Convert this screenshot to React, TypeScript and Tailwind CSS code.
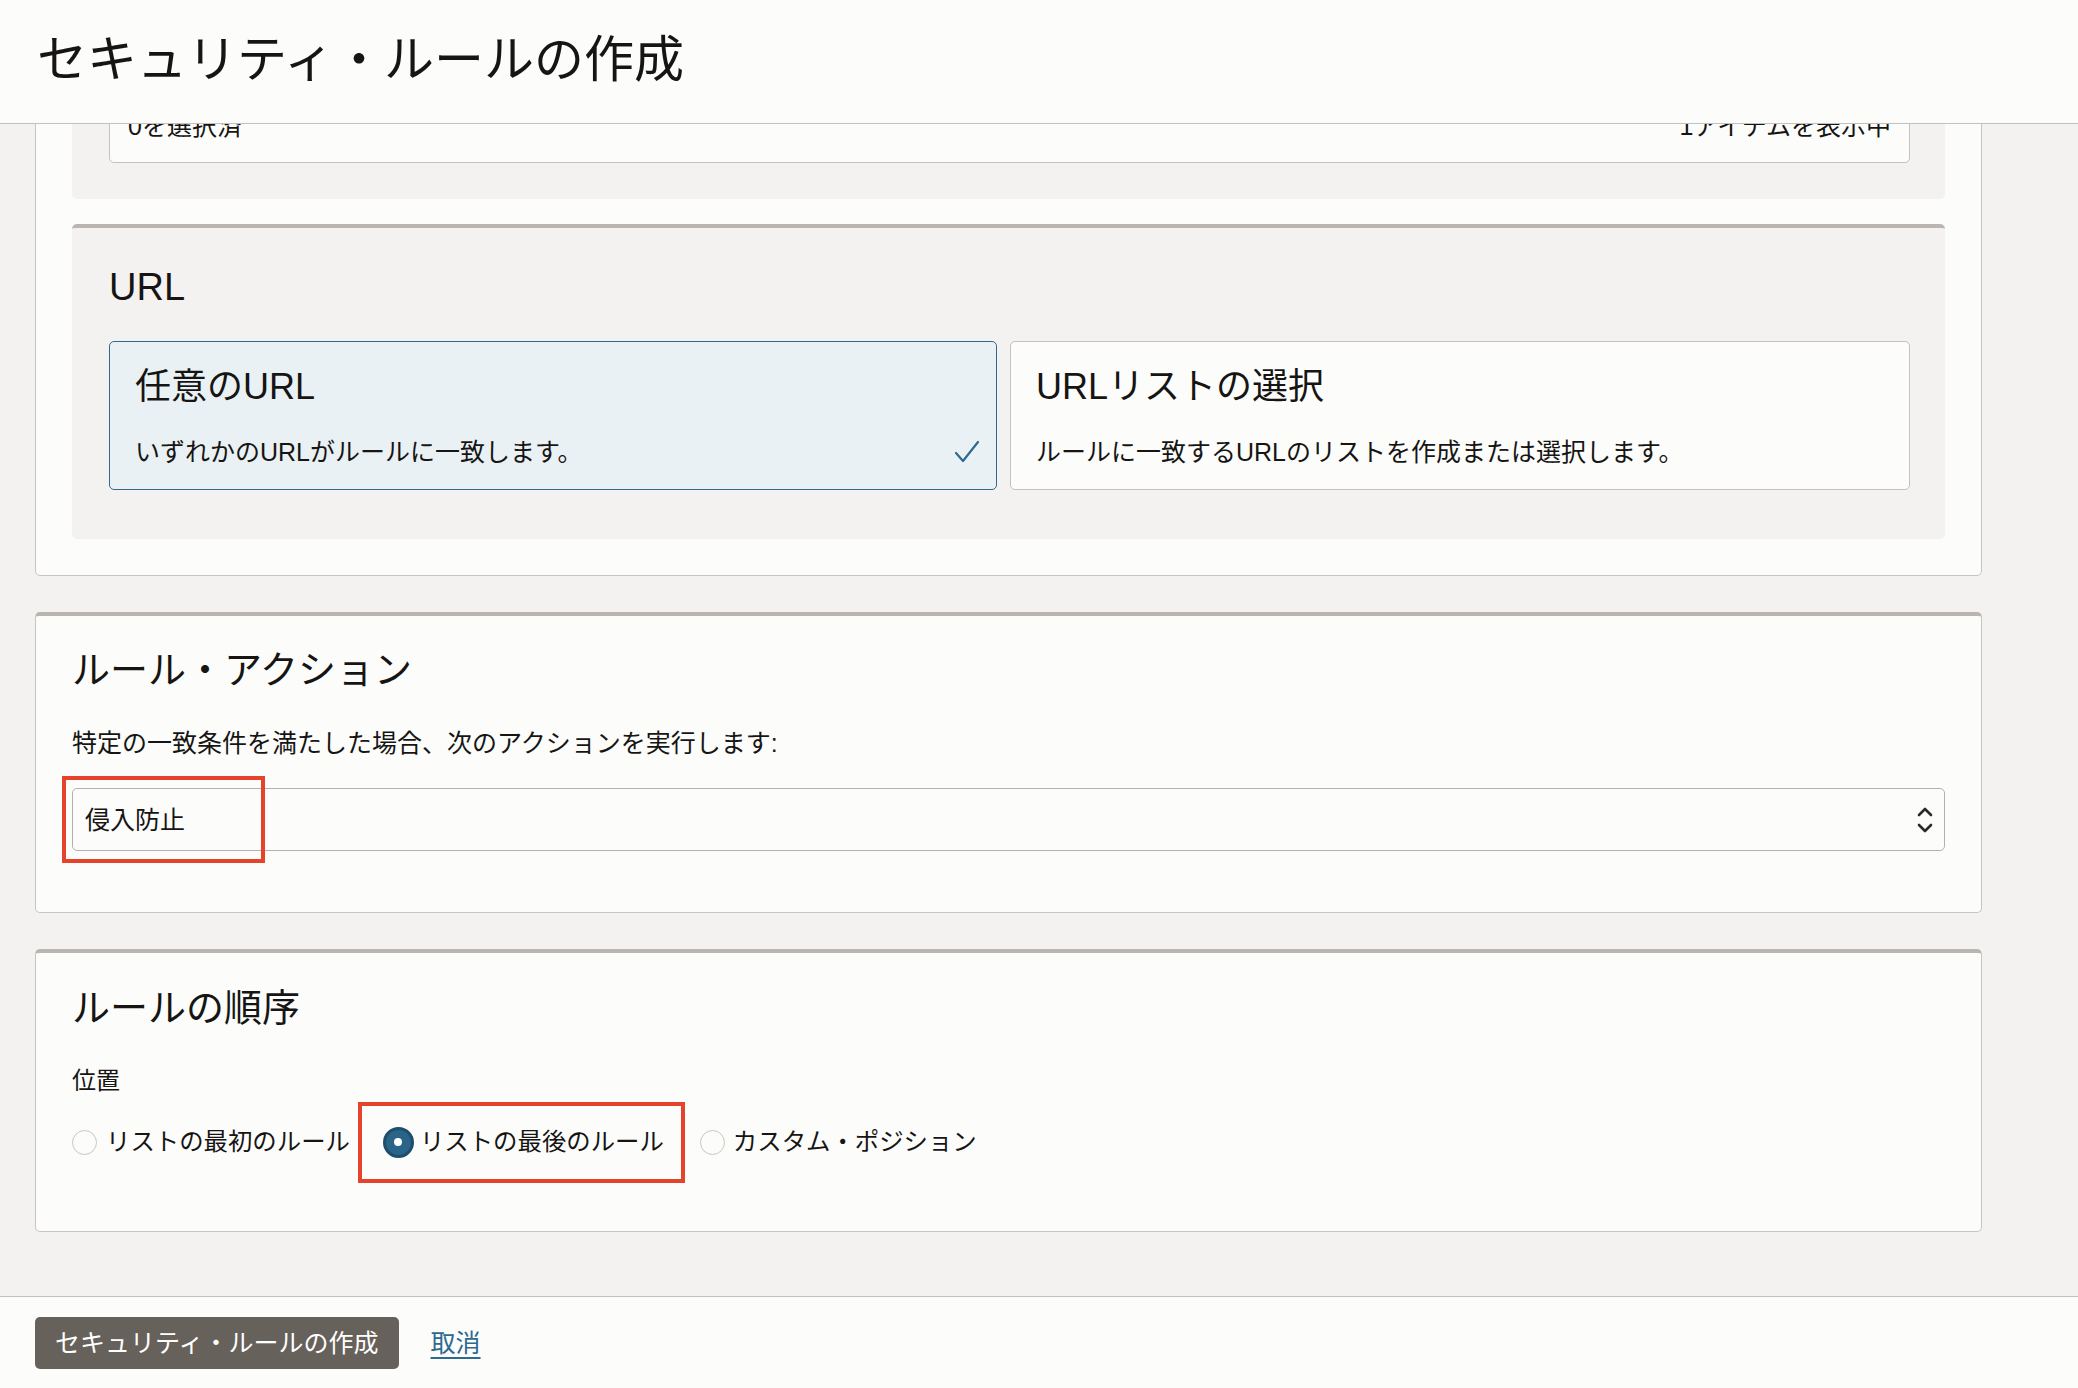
import React from "react";

const FONT = { fontFamily: '"Liberation Sans", "Noto Sans CJK JP", sans-serif' };

function ChoiceCard({ title, desc, selected, className }: { title: string; desc: string; selected?: boolean; className: string }) {
  return (
    <div
      className={`relative rounded-[5px] border pl-[25px] pr-[20px] pt-[23px] pb-[19px] ${className} ${
        selected ? "border-[#2e6b8f] bg-[#eaf1f5]" : "border-[#c5c1bd] bg-[#fcfcfb]"
      }`}
    >
      <div className="text-[36px] leading-[44px] text-[#161513]">{title}</div>
      <div className="mt-[25px] text-[25px] leading-[36px] text-[#161513]">{desc}</div>
      {selected && (
        <svg className="absolute right-[16px] bottom-[25px]" width="26" height="24" viewBox="0 0 26 24" fill="none">
          <path d="M2 13 L9 21 L24 2" stroke="#2e6b8f" strokeWidth="2.2" strokeLinecap="round" strokeLinejoin="round" />
        </svg>
      )}
    </div>
  );
}

function Radio({ checked }: { checked?: boolean }) {
  if (checked) {
    return (
      <span className="flex h-[31px] w-[31px] items-center justify-center rounded-full border-[3px] border-[#1f4e6c] bg-[#2b6489]">
        <span className="h-[8px] w-[8px] rounded-full bg-white" />
      </span>
    );
  }
  return <span className="h-[25px] w-[25px] rounded-full border-[1.5px] border-[#c9c7c5] bg-[#fcfcfb]" />;
}

export default function App() {
  return (
    <div className="flex h-[1388px] w-full flex-col overflow-hidden bg-[#f3f2f1] text-[#161513]" style={FONT}>
      {/* header */}
      <header className="flex h-[124px] shrink-0 items-center border-b border-[#c4c1bd] bg-[#fcfcfb] pl-[37px] pb-[4px]">
        <h1 className="text-[50px] leading-[60px] font-normal">セキュリティ・ルールの作成</h1>
      </header>

      {/* scrolled body */}
      <main className="flex-1 overflow-hidden pl-[35px] pr-[96px]">
        <div className="-mt-[192px] flex flex-col gap-[36px]">
          {/* card 1: source + URL */}
          <section className="rounded-[5px] border border-[#c8c4c0] bg-[#fcfcfb] px-[36px] pt-[37px] pb-[36px]">
            <div className="rounded-[5px] bg-[#f3f2f1] pl-[37px] pr-[35px] pt-[37px] pb-[36px]">
              <div className="rounded-[5px] border border-[#c5c1bd] bg-[#fcfcfb]">
                <div className="h-[100px]" />
                <div className="flex justify-between px-[18px] pb-[18px] text-[25px] leading-[36px]">
                  <span>0を選択済</span>
                  <span>1アイテムを表示中</span>
                </div>
              </div>
            </div>

            <div className="mt-[25px] rounded-[5px] border-t-[4px] border-[#bab5b0] bg-[#f3f2f1] pl-[37px] pr-[35px] pt-[36px] pb-[49px]">
              <h2 className="text-[38px] leading-[46px] font-normal">URL</h2>
              <div className="mt-[31px] flex gap-[13px]">
                <ChoiceCard className="w-[888px] shrink-0" title="任意のURL" desc="いずれかのURLがルールに一致します。" selected />
                <ChoiceCard className="flex-1" title="URLリストの選択" desc="ルールに一致するURLのリストを作成または選択します。" />
              </div>
            </div>
          </section>

          {/* card 2: rule action */}
          <section className="rounded-[5px] border border-t-[4px] border-[#c8c4c0] border-t-[#bab5b0] bg-[#fcfcfb] px-[36px] pt-[31px] pb-[61px]">
            <h2 className="text-[38px] leading-[46px] font-normal">ルール・アクション</h2>
            <p className="mt-[32px] text-[25px] leading-[36px]">特定の一致条件を満たした場合、次のアクションを実行します:</p>
            <div className="relative mt-[27px] flex h-[63px] items-center justify-between rounded-[5px] border border-[#b3b0ad] bg-[#fcfcfb] pl-[12px] pr-[10px]">
              <span className="text-[25px] leading-[36px]">侵入防止</span>
              <svg width="18" height="30" viewBox="0 0 18 30" fill="none">
                <path d="M3 10 L9 4 L15 10" stroke="#2b2a28" strokeWidth="2.6" strokeLinecap="round" strokeLinejoin="round" />
                <path d="M3 20 L9 26 L15 20" stroke="#2b2a28" strokeWidth="2.6" strokeLinecap="round" strokeLinejoin="round" />
              </svg>
              <span className="pointer-events-none absolute -left-[11px] -top-[13px] h-[87px] w-[203px] border-[4px] border-[#e5432b]" />
            </div>
          </section>

          {/* card 3: rule order */}
          <section className="rounded-[5px] border border-t-[4px] border-[#c8c4c0] border-t-[#bab5b0] bg-[#fcfcfb] px-[36px] pt-[32px] pb-[71px]">
            <h2 className="text-[38px] leading-[46px] font-normal">ルールの順序</h2>
            <div className="mt-[32px] text-[24px] leading-[36px]">位置</div>
            <div className="mt-[25px] flex items-center text-[24.4px] leading-[36px]">
              <label className="flex items-center gap-[9px]">
                <Radio />
                <span>リストの最初のルール</span>
              </label>
              <label className="relative ml-[33px] flex items-center gap-[6px]">
                <Radio checked />
                <span>リストの最後のルール</span>
                <span className="pointer-events-none absolute -left-[25px] -top-[22px] h-[81px] w-[327px] border-[4px] border-[#e5432b]" />
              </label>
              <label className="ml-[36px] flex items-center gap-[8px]">
                <Radio />
                <span>カスタム・ポジション</span>
              </label>
            </div>
          </section>
        </div>
      </main>

      {/* footer */}
      <footer className="flex h-[92px] shrink-0 items-center gap-[32px] border-t border-[#c4c1bd] bg-[#fcfcfb] pl-[35px]">
        <button className="h-[52px] rounded-[5px] bg-[#67615b] px-[20px] text-[25px] leading-[36px] text-white">
          セキュリティ・ルールの作成
        </button>
        <a href="#" className="text-[25px] leading-[36px] text-[#2c6a91] underline underline-offset-[5px]">
          取消
        </a>
      </footer>
    </div>
  );
}
